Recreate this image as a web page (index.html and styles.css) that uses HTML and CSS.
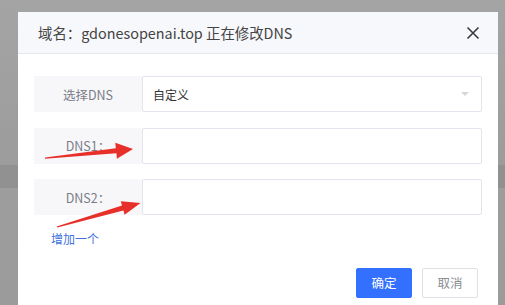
FILE: index.html
```html
<!DOCTYPE html>
<html lang="zh-CN">
<head>
<meta charset="utf-8">
<title>修改DNS</title>
<link rel="stylesheet" href="styles.css">
</head>
<body>
<div class="dialog">
  <div class="dialog-header">
    <span class="dialog-title">域名：gdonesopenai.top 正在修改DNS</span>
    <svg class="close" width="14" height="14" viewBox="0 0 14 14"><path d="M1.5 1.5 L12.5 12.5 M12.5 1.5 L1.5 12.5" stroke="#3a3a3a" stroke-width="1.6" fill="none"/></svg>
  </div>
  <div class="dialog-body">
    <div class="row">
      <div class="label">选择DNS</div>
      <div class="field select"><span>自定义</span><span class="caret"></span></div>
    </div>
    <div class="row">
      <div class="label">DNS1：</div>
      <div class="field"></div>
    </div>
    <div class="row">
      <div class="label">DNS2：</div>
      <div class="field"></div>
    </div>
    <a class="add-link">增加一个</a>
  </div>
  <div class="dialog-footer">
    <button class="btn btn-primary">确定</button>
    <button class="btn btn-default">取消</button>
  </div>
</div>
<svg class="arrows" width="505" height="305" viewBox="0 0 505 305">
  <polygon fill="#e8302a" points="45,157.6 115.8,148.2 115.3,142.7 133,149 116.9,158.7 116.4,153.2 45,158.8"/>
  <polygon fill="#e8302a" points="56.6,226.6 122,205.6 120.8,201.3 140.5,203 124.6,214.7 123.4,210.4 57.4,227.6"/>
</svg>
</body>
</html>
```
FILE: styles.css
```css
html, body {
  margin: 0;
  padding: 0;
}
body {
  width: 505px;
  height: 305px;
  overflow: hidden;
  position: relative;
  box-sizing: border-box;
  padding: 12px 0 0 18px;
  font-family: "Noto Sans CJK SC", "Noto Sans", sans-serif;
  background: linear-gradient(to bottom, #a4a4a4 0, #9c9c9c 165px, #919191 165px, #919191 188px, #9d9d9d 188px, #9b9b9b 305px);
}
.dialog {
  width: 480px;
  height: 300px;
  background: #ffffff;
  display: flex;
  flex-direction: column;
}
.dialog-header {
  height: 41px;
  background: #f7f8fc;
  border-bottom: 1px solid #e6e8ef;
  display: flex;
  align-items: center;
  justify-content: space-between;
  padding: 0 18px 0 20px;
}
.dialog-title {
  font-size: 14.4px;
  color: #444;
}
.close {
  display: block;
  margin-top: 1px;
}
.dialog-body {
  padding: 22px 16px 0 16px;
  display: flex;
  flex-direction: column;
  gap: 15.5px;
}
.row {
  display: flex;
  height: 36px;
}
.label {
  width: 108px;
  background: #f7f7f9;
  color: #7a7d87;
  font-size: 12.5px;
  display: flex;
  align-items: center;
  justify-content: center;
}
.field {
  flex: 1;
  border: 1px solid #e3e4ec;
  border-radius: 2px;
  background: #fff;
  box-sizing: border-box;
}
.select {
  display: flex;
  align-items: center;
  justify-content: space-between;
  padding: 0 12px 0 10px;
  font-size: 12px;
  color: #333;
}
.caret {
  width: 0;
  height: 0;
  border-left: 4px solid transparent;
  border-right: 4px solid transparent;
  border-top: 4px solid #d4d6dc;
}
.add-link {
  font-size: 12px;
  color: #3f72e0;
  padding-left: 17px;
  margin-top: -1px;
  cursor: pointer;
}
.dialog-footer {
  display: flex;
  justify-content: flex-end;
  gap: 10px;
  padding: 0 20px;
  margin-top: 21px;
}
.btn {
  width: 56px;
  height: 30px;
  font-family: inherit;
  font-size: 12.5px;
  border-radius: 2px;
  padding: 0;
}
.btn-primary {
  background: #3370ff;
  border: 1px solid #3370ff;
  color: #fff;
}
.btn-default {
  background: #fff;
  border: 1px solid #dfe1e6;
  color: #8a8d94;
}
.arrows {
  position: absolute;
  left: 0;
  top: 0;
  pointer-events: none;
}
```
